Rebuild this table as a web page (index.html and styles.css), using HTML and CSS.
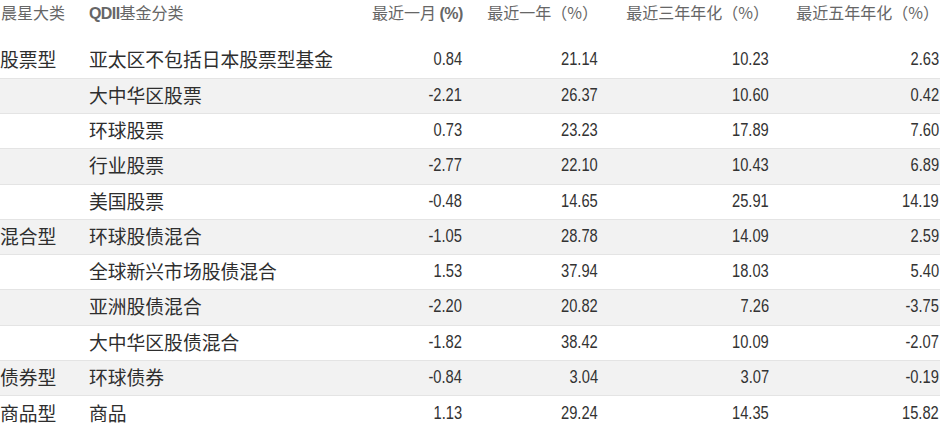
FILE: index.html
```html
<!DOCTYPE html>
<html lang="zh">
<head>
<meta charset="utf-8">
<link rel="stylesheet" href="styles.css">
</head>
<body>
<table class="tbl">
  <colgroup>
    <col class="c1"><col class="c2"><col class="c3"><col class="c4"><col class="c5"><col class="c6">
  </colgroup>
  <thead>
    <tr>
      <th class="l">晨星大类</th>
      <th class="l"><b class="lat">QDII</b>基金分类</th>
      <th class="r">最近一月 <b class="lat">(%)</b></th>
      <th class="r">最近一年（%）</th>
      <th class="r">最近三年年化（%）</th>
      <th class="r">最近五年年化（%）</th>
    </tr>
  </thead>
  <tbody>
    <tr><td>股票型</td><td>亚太区不包括日本股票型基金</td><td class="n"><span>0.84</span></td><td class="n"><span>21.14</span></td><td class="n"><span>10.23</span></td><td class="n"><span>2.63</span></td></tr>
    <tr class="g"><td></td><td>大中华区股票</td><td class="n"><span>-2.21</span></td><td class="n"><span>26.37</span></td><td class="n"><span>10.60</span></td><td class="n"><span>0.42</span></td></tr>
    <tr><td></td><td>环球股票</td><td class="n"><span>0.73</span></td><td class="n"><span>23.23</span></td><td class="n"><span>17.89</span></td><td class="n"><span>7.60</span></td></tr>
    <tr class="g"><td></td><td>行业股票</td><td class="n"><span>-2.77</span></td><td class="n"><span>22.10</span></td><td class="n"><span>10.43</span></td><td class="n"><span>6.89</span></td></tr>
    <tr><td></td><td>美国股票</td><td class="n"><span>-0.48</span></td><td class="n"><span>14.65</span></td><td class="n"><span>25.91</span></td><td class="n"><span>14.19</span></td></tr>
    <tr class="g"><td>混合型</td><td>环球股债混合</td><td class="n"><span>-1.05</span></td><td class="n"><span>28.78</span></td><td class="n"><span>14.09</span></td><td class="n"><span>2.59</span></td></tr>
    <tr><td></td><td>全球新兴市场股债混合</td><td class="n"><span>1.53</span></td><td class="n"><span>37.94</span></td><td class="n"><span>18.03</span></td><td class="n"><span>5.40</span></td></tr>
    <tr class="g"><td></td><td>亚洲股债混合</td><td class="n"><span>-2.20</span></td><td class="n"><span>20.82</span></td><td class="n"><span>7.26</span></td><td class="n"><span>-3.75</span></td></tr>
    <tr><td></td><td>大中华区股债混合</td><td class="n"><span>-1.82</span></td><td class="n"><span>38.42</span></td><td class="n"><span>10.09</span></td><td class="n"><span>-2.07</span></td></tr>
    <tr class="g"><td>债券型</td><td>环球债券</td><td class="n"><span>-0.84</span></td><td class="n"><span>3.04</span></td><td class="n"><span>3.07</span></td><td class="n"><span>-0.19</span></td></tr>
    <tr><td>商品型</td><td>商品</td><td class="n"><span>1.13</span></td><td class="n"><span>29.24</span></td><td class="n"><span>14.35</span></td><td class="n"><span>15.82</span></td></tr>
  </tbody>
</table>
</body>
</html>
```
FILE: styles.css
```css
html, body {
  margin: 0;
  padding: 0;
  background: #ffffff;
}
body {
  font-family: "Noto Sans CJK SC", "Noto Sans", sans-serif;
  color: #333333;
  width: 940px;
  height: 426px;
  overflow: hidden;
}
.tbl {
  width: 940px;
  border-collapse: collapse;
  table-layout: fixed;
}
.c1 { width: 89px; }
.c2 { width: 283px; }
.c3 { width: 90px; }
.c4 { width: 136px; }
.c5 { width: 171px; }
.c6 { width: 171px; }
th {
  height: 43px;
  padding: 0;
  vertical-align: top;
  font-size: 16px;
  line-height: 24px;
  font-weight: normal;
  color: #666666;
  white-space: nowrap;
}
th.l { text-align: left; }
th.r { text-align: right; }
th:first-child { padding-left: 1px; }
th:last-child { padding-right: 1px; }
.lat {
  font-family: "Liberation Sans", sans-serif;
  font-weight: bold;
  font-size: 16px;
  letter-spacing: -0.6px;
}
td {
  height: 35.27px;
  box-sizing: border-box;
  padding: 0 0 2px 0;
  font-size: 18.8px;
  line-height: 24px;
  white-space: nowrap;
  color: #2e2e2e;
}
tbody tr + tr td { border-top: 1px solid #e4e4e4; }
tr.g td { background: #f2f2f2; }
td.n {
  text-align: right;
  font-family: "Liberation Sans", sans-serif;
  font-size: 17.5px;
  color: #333333;
}
td.n span {
  display: inline-block;
  transform: scaleX(0.84);
  transform-origin: right center;
}
td:last-child { padding-right: 1px; }
```
